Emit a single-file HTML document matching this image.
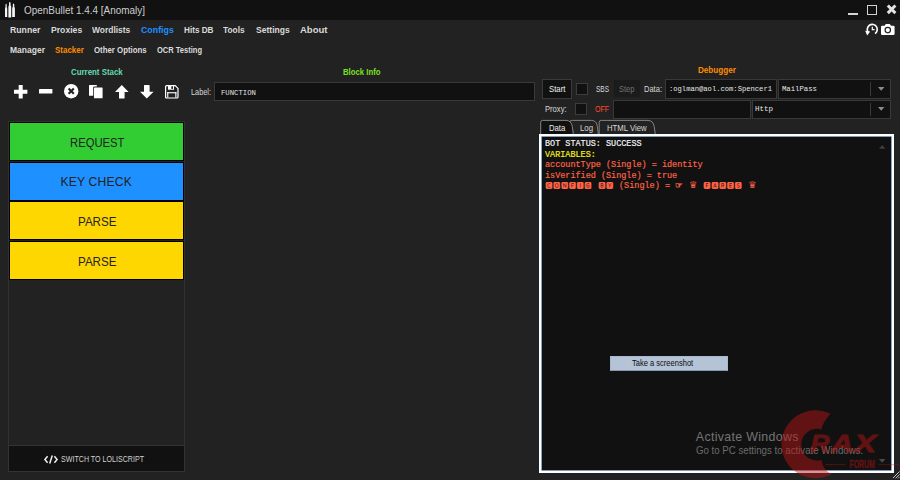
<!DOCTYPE html>
<html lang="en">
<head>
<meta charset="utf-8">
<title>OpenBullet 1.4.4 [Anomaly]</title>
<style>
*{box-sizing:border-box;margin:0;padding:0}
html,body{width:900px;height:480px;overflow:hidden;background:#222}
body{position:relative;font-family:"Liberation Sans",sans-serif;color:#ddd;-webkit-font-smoothing:antialiased}
.abs,.t{position:absolute}
.t{white-space:nowrap;line-height:1;transform-origin:0 50%}
#titlebar{left:0;top:0;width:900px;height:20px;background:#111}
.m1{font-weight:bold;font-size:9.6px;color:#dadada;top:25.2px}
.m2{font-weight:bold;font-size:8.7px;color:#dcdcdc;top:45.6px}
.hd{font-weight:bold;font-size:8.8px;top:67.7px}
.box{position:absolute;background:#111;border:1px solid #393939}
.mono{font-family:"Liberation Mono","DejaVu Sans Mono",monospace}
.lbl{font-size:8.4px;color:#d8d8d8}
.ico{position:absolute;overflow:visible}
.blk{position:absolute;left:10.3px;width:172.8px;height:37px;outline:1.3px solid #000}
.bt{font-size:12.2px;color:#222}
.out{font-size:8.5px;font-weight:normal;-webkit-text-stroke:.18px currentColor}
.sq,.sy{line-height:0}
.sq{font-family:"Noto Sans CJK JP","Noto Sans CJK SC",sans-serif;font-size:7.3px;letter-spacing:.5px;font-weight:normal;-webkit-text-stroke:0}
.sy{font-family:"DejaVu Sans","Noto Sans CJK JP",sans-serif;font-size:8px;font-weight:normal;-webkit-text-stroke:0}
</style>
</head>
<body>
<!-- title bar -->
<div id="titlebar" class="abs"></div>
<svg class="ico" style="left:0px;top:0px" width="20" height="20" viewBox="0 0 20 20"><path d="M5.00 17.00V9.00Q5.00 7.80 5.49 7.00V4.60Q6.10 2.80 6.71 4.60V7.00Q7.20 7.80 7.20 9.00V17.00zM8.40 17.60V7.20Q8.40 6.00 9.03 5.20V2.80Q9.80 1.00 10.57 2.80V5.20Q11.20 6.00 11.20 7.20V17.60zM12.20 17.00V8.80Q12.20 7.60 12.81 6.80V4.40Q13.55 2.60 14.29 4.40V6.80Q14.90 7.60 14.90 8.80V17.00z" fill="#f4f4f4"/></svg>
<span class="t" id="title" style="transform:scaleX(0.9652);left:23.5px;top:5.7px;font-size:10.3px;color:#cecece">OpenBullet 1.4.4 [Anomaly]</span>
<!-- window controls -->
<div class="abs" style="left:847.8px;top:12.9px;width:10.3px;height:2.2px;background:#d4d4d4"></div>
<div class="abs" style="left:867px;top:4.5px;width:10.2px;height:10.3px;border:1.2px solid #d0d0d0"></div>
<svg class="ico" style="left:886px;top:4.4px" width="11.200" height="10.600" viewBox="0 0 11.2 10.6"><path d="M1.800 1.500L9.400 9.100M9.400 1.500L1.800 9.100" stroke="#e2e2e2" stroke-width="3" stroke-linecap="butt"/></svg>

<!-- main menu -->
<span class="t m1" id="m_runner" style="transform:scaleX(0.9053);left:10.2px">Runner</span>
<span class="t m1" id="m_proxies" style="transform:scaleX(0.8999);left:50.8px">Proxies</span>
<span class="t m1" id="m_wordlists" style="transform:scaleX(0.8794);left:92.0px">Wordlists</span>
<span class="t m1" id="m_configs" style="transform:scaleX(0.9183);left:140.5px;color:#1e90ff">Configs</span>
<span class="t m1" id="m_hits" style="transform:scaleX(0.8514);left:183.8px">Hits DB</span>
<span class="t m1" id="m_tools" style="transform:scaleX(0.8725);left:223.3px">Tools</span>
<span class="t m1" id="m_settings" style="transform:scaleX(0.8928);left:255.5px">Settings</span>
<span class="t m1" id="m_about" style="transform:scaleX(0.9921);left:299.5px">About</span>
<!-- sub menu -->
<span class="t m2" id="s_manager" style="transform:scaleX(0.9796);left:10.0px">Manager</span>
<span class="t m2" id="s_stacker" style="transform:scaleX(0.9169);left:55.0px;color:#ff8c00">Stacker</span>
<span class="t m2" id="s_other" style="transform:scaleX(0.9024);left:93.8px">Other Options</span>
<span class="t m2" id="s_ocr" style="transform:scaleX(0.8659);left:157.0px">OCR Testing</span>

<!-- section headers -->
<span class="t hd" id="h_stack" style="transform:scaleX(0.8963);left:70.8px;color:#62dab0">Current Stack</span>
<span class="t hd" id="h_block" style="transform:scaleX(0.8817);left:342.5px;color:#7be11f">Block Info</span>
<span class="t hd" id="h_debug" style="transform:scaleX(0.9206);top:65.6px;left:697.8px;color:#ff8c00">Debugger</span>


<!-- toolbar icons -->
<svg class="ico" style="left:13.6px;top:85px" width="13.4" height="13.4" viewBox="0 0 13.4 13.4"><path d="M4.7 0h4v4.7h4.7v4H8.7v4.7h-4V8.7H0v-4h4.7z" fill="#fff"/></svg>
<svg class="ico" style="left:38.8px;top:89.2px" width="13.4" height="4.6" viewBox="0 0 13.4 4.6"><rect width="13.4" height="4.6" rx=".6" fill="#fff"/></svg>
<svg class="ico" style="left:63.8px;top:84.4px" width="14.4" height="14.4" viewBox="0 0 14.4 14.4"><circle cx="7.2" cy="7.2" r="7.2" fill="#fff"/><path d="M4.6 4.6l5.2 5.2M9.8 4.6L4.6 9.8" stroke="#222" stroke-width="2.1"/></svg>
<svg class="ico" style="left:89.4px;top:84.8px" width="13.6" height="13.2" viewBox="0 0 13.6 13.2"><path d="M.4 0h7.4v1.6H5.1q-.9 0-.9.9v8.3H.4q-.4 0-.4-.4V.4Q0 0 .4 0z" fill="#fff"/><rect x="5" y="2.4" width="8.6" height="10.8" rx=".5" fill="#fff"/></svg>
<svg class="ico" style="left:114.6px;top:84.6px" width="13.6" height="13.6" viewBox="0 0 13.6 13.6"><path d="M6.8 0L13.6 6.9H9.6V13.1q0 .5-.5.5H4.5q-.5 0-.5-.5V6.9H0z" fill="#fff"/></svg>
<svg class="ico" style="left:139.8px;top:84.8px" width="13.6" height="13.6" viewBox="0 0 13.6 13.6"><path d="M6.8 13.6L13.6 6.7H9.6V.5q0-.5-.5-.5H4.5q-.5 0-.5.5V6.7H0z" fill="#fff"/></svg>
<svg class="ico" style="left:165.2px;top:85px" width="13.6" height="13.6" viewBox="0 0 13.6 13.6"><path d="M1 .6h9.2l2.8 2.8V12q0 1-1 1H1.6q-1 0-1-1V1.6q0-1 1-1z" fill="none" stroke="#fff" stroke-width="1.2"/><rect x="3" y=".8" width="6" height="3.9" fill="#fff"/><rect x="6.3" y="1.3" width="1.7" height="2.6" fill="#222"/><rect x="2.2" y="7.2" width="9.2" height="1.1" fill="#fff"/><rect x="2.2" y="7.2" width="1.1" height="5.4" fill="#fff"/><rect x="10.3" y="7.2" width="1.1" height="5.4" fill="#fff"/></svg>

<!-- label row -->
<span class="t lbl" id="l_label" style="transform:scaleX(0.8760);left:191.0px;top:87.6px">Label:</span>
<div class="box" style="left:214px;top:81.8px;width:320.6px;height:19.4px"></div>
<span class="t mono" id="i_function" style="transform:scaleX(0.9112);left:220.5px;top:89.1px;font-size:8.0px;color:#e6e6e6">FUNCTION</span>

<!-- stack panel -->
<div class="abs" style="left:8.4px;top:121.4px;width:176.3px;height:324.6px;border:1px solid #313131"></div>
<div class="blk" style="top:123px;background:#32cd32"></div>
<span class="t bt" id="b1" style="transform:scaleX(0.9250);left:69.5px;top:136.5px">REQUEST</span>
<div class="blk" style="top:162.6px;background:#1e90ff"></div>
<span class="t bt" id="b2" style="letter-spacing:0.142px;left:60.5px;top:175.5px">KEY CHECK</span>
<div class="blk" style="top:202.2px;background:#ffd700"></div>
<span class="t bt" id="b3" style="transform:scaleX(0.9525);left:77.5px;top:215.7px">PARSE</span>
<div class="blk" style="top:241.8px;background:#ffd700"></div>
<span class="t bt" id="b4" style="transform:scaleX(0.9525);left:77.5px;top:255.6px">PARSE</span>
<div class="box" style="left:8.4px;top:445.4px;width:176.3px;height:26.200px;border-color:#333"></div>
<svg class="ico" style="left:44.4px;top:454.6px" width="14" height="9" viewBox="0 0 14 9"><path d="M3.6 1.2L.9 4.5l2.7 3.3M10.4 1.2l2.7 3.3-2.7 3.3M8.3.4L5.7 8.6" fill="none" stroke="#f0f0f0" stroke-width="1.5"/></svg>
<span class="t" id="sw" style="transform:scaleX(0.8559);left:61.2px;top:454.6px;font-size:8.3px;color:#d2d2d2">SWITCH TO LOLISCRIPT</span>

<!-- top-right icons -->
<svg class="ico" style="left:864.8px;top:23.200px" width="14" height="13" viewBox="0 0 14 13"><path d="M3.200 9.300A5 5 0 1 1 10 10.600" fill="none" stroke="#fff" stroke-width="1.700"/><path d="M.2 7.800l5 .6-3 4.200z" fill="#fff"/><path d="M7.300 3.700v2.900h2.300" fill="none" stroke="#fff" stroke-width="1.200"/></svg>
<svg class="ico" style="left:880.8px;top:24px" width="13.600" height="11" viewBox="0 0 13.600 11"><path d="M1.300 1.800h2.300L4.400.4Q4.600 0 5 0h3.600q.4 0 .6.400l.8 1.400h2.300q1.300 0 1.300 1.300v6.600q0 1.300-1.300 1.300H1.300Q0 11 0 9.700V3.100Q0 1.800 1.300 1.800z" fill="#fff"/><circle cx="6.800" cy="6.100" r="3.300" fill="#222"/><circle cx="6.800" cy="6.100" r="2.100" fill="#fff"/></svg>

<!-- debugger row 1 -->
<div class="box" style="left:542px;top:79.4px;width:29.6px;height:19.2px;border-color:#3a3a3a"></div>
<span class="t lbl" id="d_start" style="transform:scaleX(0.9271);left:549.0px;top:85px;color:#f0f0f0">Start</span>
<div class="box" style="left:575.6px;top:83px;width:12.6px;height:12.4px;border-color:#3c3c3c"></div>
<span class="t lbl" id="d_sbs" style="transform:scaleX(0.7752);left:595.6px;top:85px">SBS</span>
<div class="box" style="left:612.6px;top:79.4px;width:28px;height:19px;background:#1b1b1b;border-color:#212121"></div>
<span class="t lbl" id="d_step" style="transform:scaleX(0.8933);left:618.6px;top:85px;color:#727272">Step</span>
<span class="t lbl" id="d_data" style="transform:scaleX(0.8987);left:644.0px;top:85px">Data:</span>
<div class="box" style="left:665px;top:79.4px;width:112.4px;height:19.2px"></div>
<span class="t mono" id="i_data" style="transform:scaleX(0.9172);left:669.4px;top:86.3px;font-size:7.8px;color:#e6e6e6">:oglman@aol.com:Spencer1</span>
<div class="box" style="left:778.2px;top:79.4px;width:112.4px;height:19.2px"></div>
<span class="t mono" id="i_mailpass" style="transform:scaleX(0.9348);left:781.6px;top:85.7px;font-size:7.8px;color:#e6e6e6">MailPass</span>
<div class="abs" style="left:870.2px;top:82.4px;width:1px;height:13.4px;background:#3a3a3a"></div>
<svg class="ico" style="left:878px;top:87.200px" width="6.4" height="3.800" viewBox="0 0 6.4 3.800"><path d="M0 0h6.400L3.200 3.800z" fill="#8c8c8c"/></svg>
<!-- debugger row 2 -->
<span class="t lbl" id="d_proxy" style="transform:scaleX(0.9095);left:545.4px;top:104.8px">Proxy:</span>
<div class="box" style="left:575px;top:102.8px;width:12.4px;height:12px;border-color:#3c3c3c"></div>
<span class="t lbl" id="d_off" style="transform:scaleX(0.8358);left:595.0px;top:104.6px;color:#ff4a2a">OFF</span>
<div class="box" style="left:612.8px;top:99.8px;width:138.6px;height:18.8px"></div>
<div class="box" style="left:752px;top:99.8px;width:138.6px;height:18.8px"></div>
<span class="t mono" id="i_http" style="transform:scaleX(0.9615);left:755.0px;top:105.6px;font-size:7.8px;color:#e6e6e6">Http</span>
<div class="abs" style="left:870.2px;top:102.6px;width:1px;height:13.2px;background:#3a3a3a"></div>
<svg class="ico" style="left:878px;top:107.200px" width="6.4" height="3.800" viewBox="0 0 6.4 3.800"><path d="M0 0h6.400L3.200 3.800z" fill="#8c8c8c"/></svg>

<!-- tabs -->
<svg class="ico" style="left:536px;top:116px" width="130" height="24" viewBox="536 116 130 24">
  <g stroke="#8e8e8e" stroke-width=".9" fill="#222">
  <path d="M599.200 134.800V122.300Q599.200 120.400 601.200 120.400H648Q653 120.400 654.200 126.500L655.400 134.800z"/>
  <path d="M569.500 134.800V122.300Q569.500 120.400 572.500 120.400H591.500Q596.500 120.400 597.400 126.500L598.400 134.800z"/>
  <path d="M540.700 134.800V122.300Q540.700 120.400 542.700 120.400H566Q571.300 120.400 572.300 126.500L573.400 134.800z" fill="#111"/>
  </g>
</svg>
<span class="t lbl" id="t_data" style="transform:scaleX(0.9209);left:549.0px;top:123.800px;color:#f0f0f0">Data</span>
<span class="t lbl" id="t_log" style="transform:scaleX(0.9299);left:579.8px;top:123.800px">Log</span>
<span class="t lbl" id="t_html" style="transform:scaleX(0.9269);left:607.3px;top:123.800px">HTML View</span>

<!-- data box -->
<div class="abs" style="left:539.4px;top:134.400px;width:354.2px;height:338.800px;background:#111;border:2.600px solid #fff;box-shadow:inset 0 0 0 .8px #a8ccf4"></div>
<div class="t mono out" id="o1" style="transform:scaleX(0.9967);left:545.2px;top:139.9px;color:#f4f4f4">BOT STATUS: SUCCESS</div>
<div class="t mono out" id="o2" style="transform:scaleX(0.9967);left:545.3px;top:150.9px;color:#f2f21a">VARIABLES:</div>
<div class="t mono out" id="o3" style="transform:scaleX(0.9967);left:545.3px;top:160.9px;color:#ff6347">accountType (Single) = identity</div>
<div class="t mono out" id="o4" style="transform:scaleX(0.9967);left:545.3px;top:171.9px;color:#ff6347">isVerified (Single) = true</div>
<div class="t mono out" id="o5" style="left:545.3px;top:181.5px;color:#ff6347"><span class="sq" id="q1">🅲🅾🅽🅵🅸🅶</span> <span class="sq" id="q2" style="margin-left:1.1px">🅱🆈</span> (Single) = <span class="sy" id="y1" style="font-size:8.6px;-webkit-text-stroke:.35px currentColor">☞</span> <span class="sy" id="y2" style="margin-left:1.2px;font-size:9.2px">♛</span> <span class="sq" id="q3" style="margin-left:.9px">🅵🅰🆁🅴🆂</span> <span class="sy" id="y3" style="margin-left:.9px;font-size:9.2px">♛</span></div>
<!-- scrollbar arrows -->
<svg class="ico" style="left:878.6px;top:145.400px" width="6.4" height="3.800" viewBox="0 0 6.4 3.8"><path d="M0 3.800h6.400L3.200 0z" fill="#3e3e3e"/></svg>
<svg class="ico" style="left:878.6px;top:459px" width="6.4" height="3.800" viewBox="0 0 6.4 3.8"><path d="M0 0h6.400L3.200 3.800z" fill="#4a4a4a"/></svg>

<!-- tooltip -->
<div class="abs" style="left:609.6px;top:355.600px;width:118px;height:15.200px;background:#b4c4d6;border:1px solid #a9bace;border-bottom-color:#8498b2"></div>
<div class="abs" style="left:628px;top:357.400px;width:0;height:12px;border-left:1px dotted #c8c4bc"></div>
<span class="t" id="tip" style="transform:scaleX(0.9209);left:631.6px;top:360.4px;font-size:8.2px;color:#0c0c0c">Take a screenshot</span>

<!-- activate windows watermark -->
<span class="t" id="aw1" style="letter-spacing:0.319px;left:695.8px;top:431.4px;font-size:12.4px;color:#747474">Activate Windows</span>
<span class="t" id="aw2" style="transform:scaleX(0.9394);left:695.8px;top:446.3px;font-size:10.3px;color:#6c6c6c">Go to PC settings to activate Windows.</span>

<!-- watermark logo -->
<svg class="ico" style="left:770px;top:400px" width="130" height="80" viewBox="770 400 130 80">
  <g opacity=".46" fill="#c01414" stroke="#c01414">
    <path stroke="none" d="M830.600 413.800A34 34 0 1 0 832 474Q823 470.800 821.500 460A15.900 15.900 0 1 1 821.500 429.400Q822.500 422.500 830.600 413.800z"/>
    <text id="rax" y="452" font-family="Liberation Sans, sans-serif" font-weight="bold" font-style="italic" font-size="24" stroke-width=".9"><tspan x="810.500" textLength="19" lengthAdjust="spacingAndGlyphs">R</tspan><tspan x="831" textLength="22" lengthAdjust="spacingAndGlyphs">A</tspan><tspan x="854" textLength="22" lengthAdjust="spacingAndGlyphs">X</tspan></text>
    <text id="forum" x="849.400" y="468.300" font-family="Liberation Sans, sans-serif" font-weight="bold" font-size="10" stroke-width=".3" textLength="25.500" lengthAdjust="spacingAndGlyphs">FORUM</text>
    <path d="M825.200 464.700H845.800M878.500 464.700H899" fill="none" stroke-width=".8"/>
  </g>
</svg>
<!-- resize grip -->
<svg class="ico" style="left:892px;top:471px" width="8" height="8" viewBox="0 0 8 8"><path d="M1 7L7.500 .5M3.600 7.300L7.600 3.300M6 7.400L7.600 5.800" stroke="#c4c4c4" stroke-width="1"/></svg>
</body>
</html>
